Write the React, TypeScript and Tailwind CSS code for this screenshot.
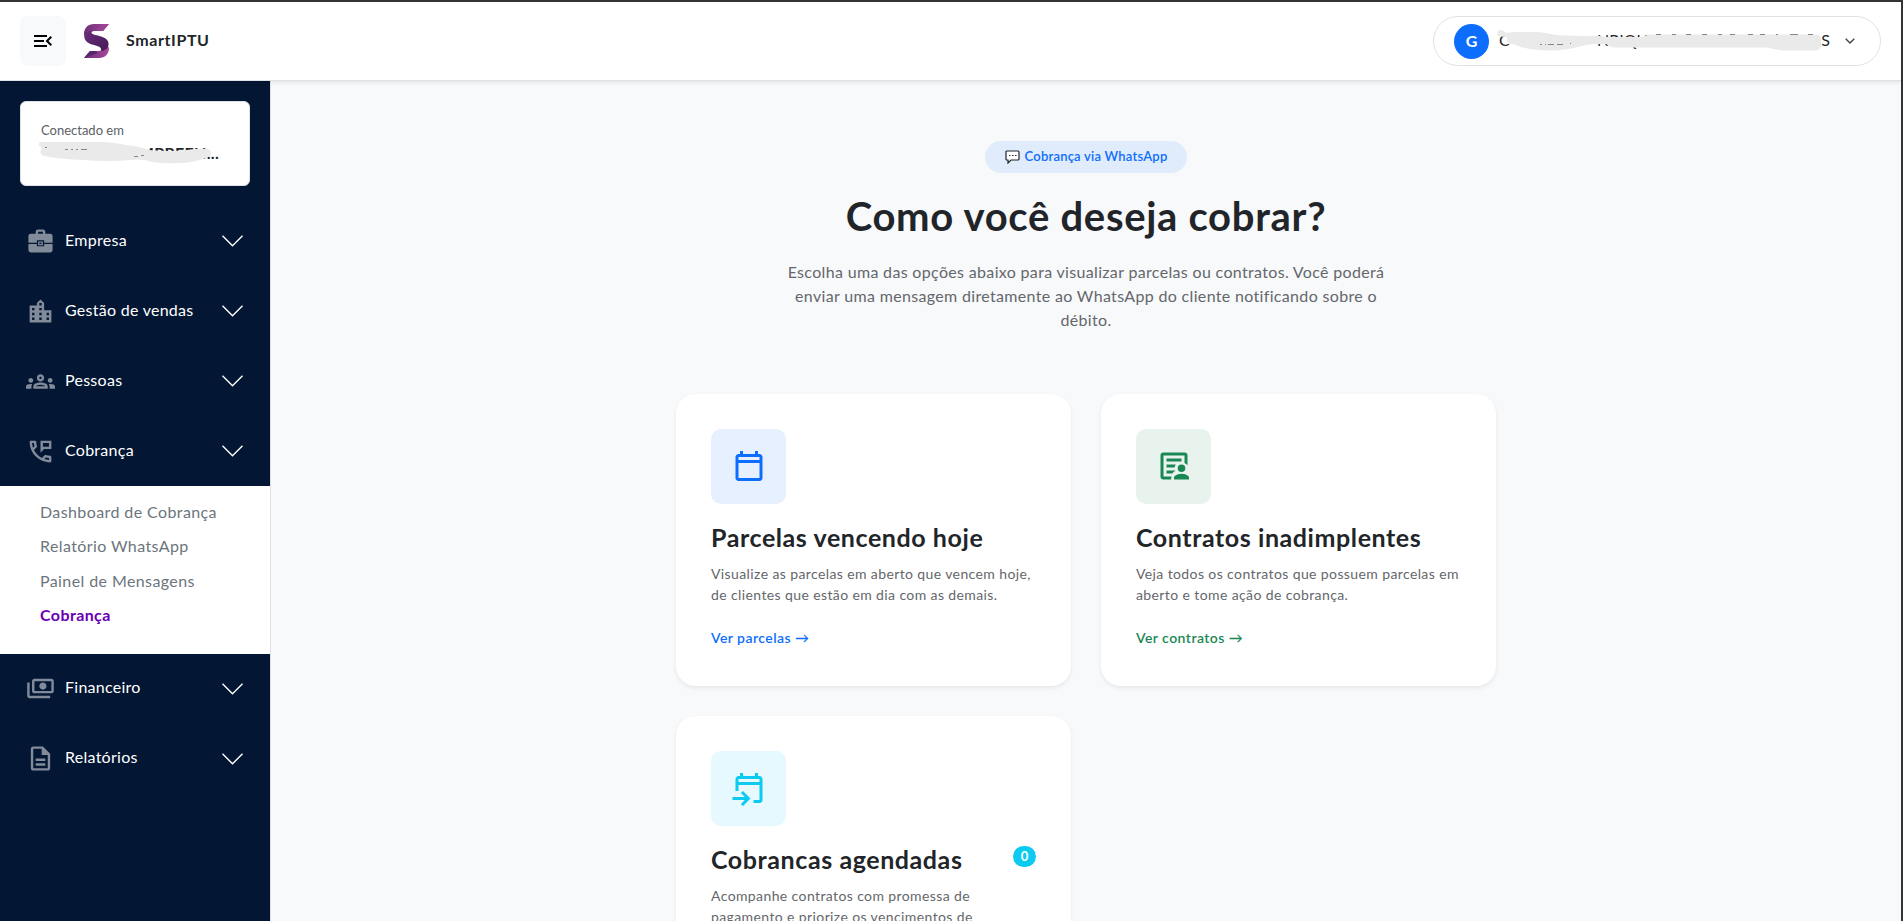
import type { ReactNode } from 'react';
import { clsx } from 'clsx';
import { MdMenuOpen, MdLocationCity, MdOutlineGroups, MdOutlinePermPhoneMsg, MdOutlinePayments } from 'react-icons/md';

interface MenuItemProps {
  label: string;
  icon: ReactNode;
}

interface OptionCardProps {
  title: string;
  lines: string[];
  action?: string;
  icon: ReactNode;
  boxClass: string;
  linkClass?: string;
  count?: number;
}

function Logo() {
  return (
    <svg width="25" height="34" viewBox="0 0 25 34" fill="none">
      <defs>
        <linearGradient id="top" x1="0" y1="0" x2="1" y2="0">
          <stop offset="0" stopColor="#6b3078" />
          <stop offset="1" stopColor="#a8479c" />
        </linearGradient>
        <linearGradient id="mid" x1="0" y1="0" x2="1" y2="1">
          <stop offset="0" stopColor="#6d2f79" />
          <stop offset="0.5" stopColor="#56246a" />
          <stop offset="1" stopColor="#45194f" />
        </linearGradient>
      </defs>
      <path d="M25 0H10C4 0 0 4 0 10l2 3 5-2c0-3 1-4 4-4h8z" fill="url(#top)" />
      <path d="M0 34h15c6 0 10-4 10-10l-2-3-5 2c0 3-1 4-4 4H6z" fill="url(#top)" />
      <path d="M.5 8C-1 16 3 19 8 20.500c6 2 10 2 9 6.500 2 0 7-2 7.500-6 .5-5-3-7-7.500-8.500C11 10.500 7 11 7 7z" fill="url(#mid)" />
      <path d="M25 0l-6 7h-5l-2-1.500z" fill="#9a4496" />
      <path d="M0 34l6-7h5l3 2z" fill="#56266b" />
    </svg>
  );
}

function BriefcaseIcon() {
  return (
    <svg width="29" height="29" viewBox="0 0 24 24" fill="currentColor">
      <path d="M2 13V7.500q0-2 2-2h4V4q0-2 2-2h4q2 0 2 2v1.500h4q2 0 2 2V13h-7v-2H9v2zM10 5.500h4V4h-4zM4 21q-2 0-2-2v-5h7v2h6v-2h7v5q0 2-2 2zM10 12h4v3h-4zm1 1v1h2v-1z" />
    </svg>
  );
}

function FileIcon() {
  return (
    <svg width="29" height="29" viewBox="0 0 24 24" fill="currentColor">
      <path d="M8 16h8v2H8zm0-4h8v2H8zm6-10H6c-1.100 0-2 .9-2 2v16c0 1.100.89 2 1.990 2H18c1.100 0 2-.9 2-2V8zm4 18H6V4h7v5h5z" />
    </svg>
  );
}

function CalendarIcon() {
  return (
    <svg width="36" height="36" viewBox="0 -960 960 960" fill="currentColor">
      <path d="M200-80q-33 0-56.500-23.500T120-160v-560q0-33 23.500-56.500T200-800h40v-80h80v80h320v-80h80v80h40q33 0 56.500 23.500T840-720v560q0 33-23.500 56.500T760-80H200Zm0-80h560v-400H200v400Zm0-480h560v-80H200v80Z" />
    </svg>
  );
}

function UpcomingIcon() {
  return (
    <svg width="36" height="36" viewBox="0 -960 960 960" fill="currentColor">
      <path d="M600-80v-80h160v-400H200v160h-80v-320q0-33 23.500-56.500T200-800h40v-80h80v80h320v-80h80v80h40q33 0 56.500 23.500T840-720v560q0 33-23.500 56.500T760-80H600ZM320 0l-56-56 103-104H40v-80h327L264-344l56-56 200 200L320 0ZM200-640h560v-80H200v80Z" />
    </svg>
  );
}

function DebtorIcon() {
  return (
    <svg width="36" height="36" viewBox="0 0 24 24" fill="currentColor">
      <path d="M5 21q-2 0-2-2V5q0-2 2-2h14q2 0 2 2v6.500q-.8-1-2-1.500V5H5v14h5.400q-.3.500-.3 2z" />
      <path d="M7 7h10v2H7zM7 11h6.200q-.7.900-.8 2H7zM7 15h6q-1.300 1-2.200 2H7z" />
      <circle cx="17" cy="13.500" r="2.500" />
      <path d="M12 21v-1.300q0-.6.500-1Q14.300 17.200 17 17.200t4.500 1.500q.5.400.5 1V21z" />
    </svg>
  );
}

function MenuItem({ label, icon }: MenuItemProps) {
  return (
    <button className="flex h-[70px] w-full items-center pl-[25px] pr-[27px] text-left text-white">
      <span className="flex w-[30px] justify-center text-white/50">{icon}</span>
      <span className="ml-[10px] flex-1 pb-[3px] text-base tracking-[0.27px]">{label}</span>
      <svg width="21" height="12" viewBox="0 0 21 12" fill="none" stroke="currentColor" strokeWidth="1.4">
        <path d="M.5.8l10 10 10-10" />
      </svg>
    </button>
  );
}

function OptionCard({ title, lines, action, icon, boxClass, linkClass, count }: OptionCardProps) {
  return (
    <div className="h-[292px] rounded-[20px] bg-white p-[35px] shadow-[0_2px_4px_rgba(0,0,0,0.075)]">
      <div className={clsx('flex size-[75px] items-center justify-center rounded-[10px] pb-px', boxClass)}>{icon}</div>
      <div className="mt-[19px] flex items-start justify-between">
        <h5 className="text-[25px] leading-[29px] font-bold tracking-[0.58px] text-[#212529]">{title}</h5>
        {count !== undefined && (
          <span className="mt-px flex h-[21px] w-[23px] items-center justify-center rounded-full bg-[#0dcaf0] text-[13px] font-bold text-white">
            {count}
          </span>
        )}
      </div>
      <p className="mt-[11px] text-sm leading-[21px] tracking-[0.39px] whitespace-nowrap text-[#64676b]">
        {lines.map((line) => (
          <span key={line} className="block">
            {line}
          </span>
        ))}
      </p>
      {action && (
        <a className={clsx('mt-[22px] block text-sm leading-[21px] font-semibold tracking-[0.45px]', linkClass)}>
          {action} →
        </a>
      )}
    </div>
  );
}

export default function App() {
  return (
    <div className="flex h-[921px] w-full flex-col overflow-hidden border-t-2 border-r-2 border-[#333] bg-[#f8f9fb] font-['Lato','Noto_Sans',sans-serif] text-[#212529]">
      <header className="z-10 flex h-[79px] shrink-0 items-center justify-between border-b border-[#dee2e6] bg-white pr-5 pl-5 shadow-[0_2px_4px_rgba(0,0,0,0.075)]">
        <div className="flex items-center">
          <button className="flex h-[50px] w-[46px] items-center justify-center rounded-lg bg-[#f8f9fa] text-black">
            <MdMenuOpen size={24} />
          </button>
          <span className="ml-[18px]">
            <Logo />
          </span>
          <span className="ml-[17px] pb-0.5 text-base font-bold tracking-[0.6px]">SmartIPTU</span>
        </div>

        <div className="flex h-[50px] w-[448px] items-center rounded-full border border-[#dee2e6] pl-5">
          <span className="flex size-[35px] items-center justify-center rounded-full bg-[#0d6efd] pb-px text-base font-bold text-white">
            G
          </span>
          <div className="relative ml-[10px] flex h-6 w-[331px] items-center text-base leading-6">
            <span className="w-[98px] pb-0.5">C</span>
            <span className="flex-1 pb-0.5">NRIQUE</span>
            <span className="pb-0.5">S</span>
            <svg className="absolute top-0 -left-[3px]" width="336" height="26" viewBox="0 0 336 26" fill="#eaeaea">
              <path d="M1 5q0-4 4-4 3 0 5 3 5-1 12-1h20q10 1 18 3 14 1 36 1h8q2 0 6 1h36q4-2 8-2.500h165q5 0 6 3v9q-1 4-5 4h-34q-8-1-14-3H120q-6 0-10-3.500H98q-6 0-14 2.500-14 4-30 4-22 0-36-6-5-1-7-3.500V8Q1 8 1 5z" />
              <path
                d="M44 15.500h2M49 15.500h1M52 15.500h6M61 15.500h6M74 14.500h1M160 5.500h5M176 5.500h4M190 5.500h5M206 5.500h5M222 5.500h4M234 5.500h5M252 5.500h5M264 5.500h5M280 5.500h2M294 5.500h8M312 5.500h5"
                stroke="#888"
                strokeWidth="1"
              />
            </svg>
          </div>
          <svg className="ml-[15px]" width="10" height="6" viewBox="0 0 10 6" fill="none" stroke="#444" strokeWidth="1.4">
            <path d="M.7.700L5 5 9.300.7" />
          </svg>
        </div>
      </header>

      <div className="flex min-h-0 flex-1">
        <aside className="w-[271px] shrink-0 border-r border-[#dee2e6] bg-[#031633]">
          <div className="mx-5 mt-5 mb-5 h-[85px] rounded-md border border-[#dee2e6] bg-white pt-[18px] pl-5">
            <p className="text-[13px] leading-5 text-[#5c6065]">Conectado em</p>
            <div className="relative mt-px h-6 w-[178px] text-right text-base leading-[23px] font-bold tracking-[0.3px]">
              <span>EMPREEN...</span>
              <svg className="absolute top-0 -left-1" width="176" height="24" viewBox="0 0 176 24" fill="#eaeaea">
                <path d="M3 1h65q12 1 20 3 14 1 24 5 20 2 38 0 12-2 21-1 4 2 3 6-3 3-8 4-12 4-24 4-24 1-34-3-8-1-14 0-24 2-48 0-24-1-38-4-6-1-4-6 1-3 0-3-4-2-1-5z" />
                <path d="M8 6.500h2M28 8.500h3M34 8.500h2M39 8.500h2M44 8.500h6M97 15.500h4M104 14.500h3" stroke="#888" />
              </svg>
            </div>
          </div>

          <nav>
            <MenuItem label="Empresa" icon={<BriefcaseIcon />} />
            <MenuItem label="Gestão de vendas" icon={<MdLocationCity size={29} />} />
            <MenuItem label="Pessoas" icon={<MdOutlineGroups size={29} />} />
            <MenuItem label="Cobrança" icon={<MdOutlinePermPhoneMsg size={29} />} />
            <div className="flex h-[167.500px] flex-col bg-white pt-[9px] pl-10 text-base leading-[34.300px] tracking-[0.4px] text-[#6c757d]">
              <a>Dashboard de Cobrança</a>
              <a>Relatório WhatsApp</a>
              <a>Painel de Mensagens</a>
              <a className="font-bold text-[#6a00b4]">Cobrança</a>
            </div>
            <MenuItem label="Financeiro" icon={<MdOutlinePayments size={29} className="-scale-x-100" />} />
            <MenuItem label="Relatórios" icon={<FileIcon />} />
          </nav>
        </aside>

        <main className="flex-1 pt-[60px]">
          <div className="mx-auto flex w-[820px] flex-col items-center">
            <div className="flex h-8 items-center gap-[5px] rounded-full bg-[#e0ebfb] px-5 text-[13px] font-semibold tracking-[0.22px] text-[#0d6efd]">
              <svg width="15" height="14" viewBox="0 0 15 14" fill="white" stroke="#212529" strokeWidth="1.2">
                <path d="M2 1h11q1 0 1 1v7q0 1-1 1H6l-3 3v-3H2q-1 0-1-1V2q0-1 1-1z" />
                <path d="M4 5.500h1.500M7 5.500h1.500M10 5.500h1.500" />
              </svg>
              Cobrança via WhatsApp
            </div>
            <h1 className="mt-[19px] text-[40px] leading-[48px] font-bold tracking-[0.7px]">Como você deseja cobrar?</h1>
            <p className="mt-5 text-center text-base leading-6 tracking-[0.33px] text-[#64676b]">
              Escolha uma das opções abaixo para visualizar parcelas ou contratos. Você poderá
              <br />
              enviar uma mensagem diretamente ao WhatsApp do cliente notificando sobre o
              <br />
              débito.
            </p>
          </div>

          <div className="mx-auto mt-[62px] grid w-[820px] grid-cols-2 gap-[30px]">
            <OptionCard
              title="Parcelas vencendo hoje"
              lines={['Visualize as parcelas em aberto que vencem hoje,', 'de clientes que estão em dia com as demais.']}
              action="Ver parcelas"
              icon={<CalendarIcon />}
              boxClass="bg-[#e7f0ff] text-[#0d6efd]"
              linkClass="text-[#0d6efd]"
            />
            <OptionCard
              title="Contratos inadimplentes"
              lines={['Veja todos os contratos que possuem parcelas em', 'aberto e tome ação de cobrança.']}
              action="Ver contratos"
              icon={<DebtorIcon />}
              boxClass="bg-[#e8f3ee] text-[#198754]"
              linkClass="text-[#198754]"
            />
            <OptionCard
              title="Cobrancas agendadas"
              lines={['Acompanhe contratos com promessa de', 'pagamento e priorize os vencimentos de']}
              icon={<UpcomingIcon />}
              boxClass="bg-[#e6f9fe] text-[#0dcaf0]"
              count={0}
            />
          </div>
        </main>
      </div>
    </div>
  );
}
